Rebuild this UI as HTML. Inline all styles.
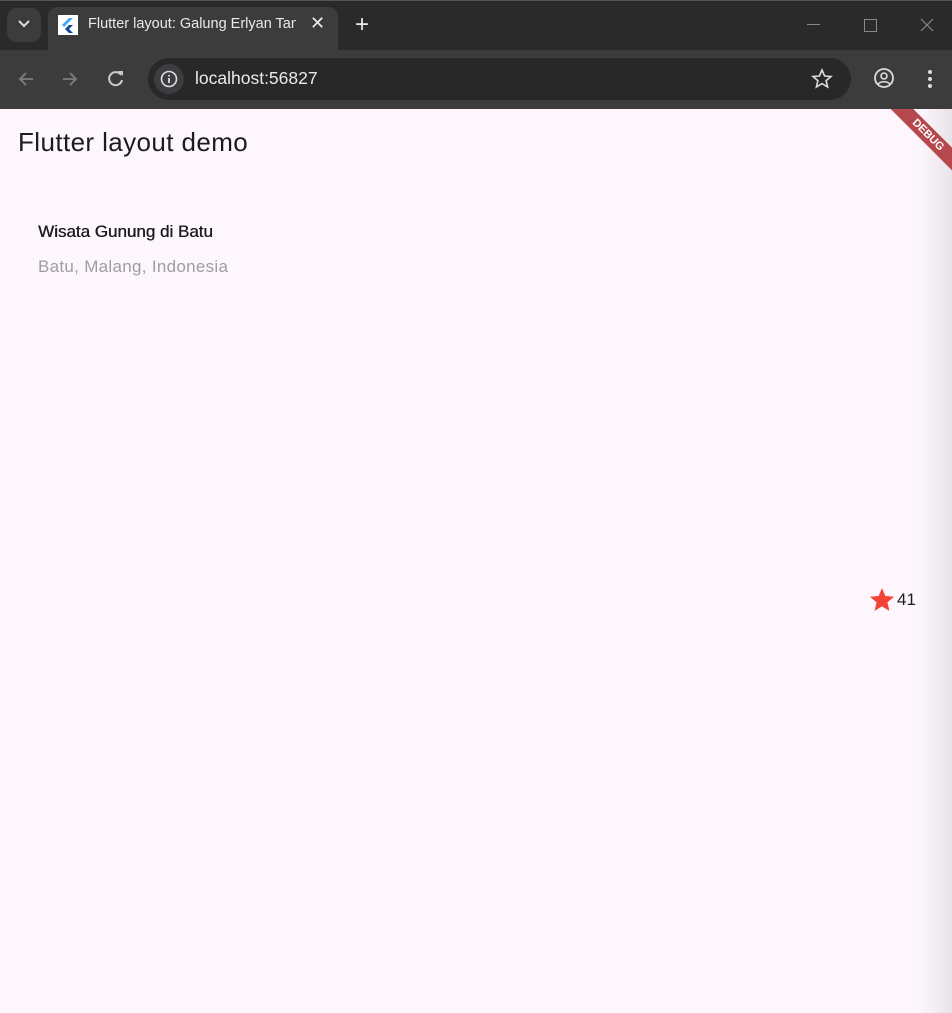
<!DOCTYPE html><html><head><style>
body{margin:0;width:952px;height:1013px;overflow:hidden;background:#fdf7fd;font-family:"Liberation Sans",sans-serif;position:relative}
.top{position:absolute;left:0;top:0;width:952px;height:50px;background:#2a2a2a;border-top:1px solid #555}
.bar{position:absolute;left:0;top:50px;width:952px;height:59px;background:#3c3c3c}
.tab{position:absolute;left:48px;top:7px;width:290px;height:43px;background:#3c3c3c;border-radius:10px 10px 0 0}
.abs{position:absolute}
.omni{position:absolute;left:148px;top:58px;width:703px;height:42px;background:#282828;border-radius:21px}
.shadow{position:absolute;right:0;top:109px;width:34px;height:904px;background:linear-gradient(to right,rgba(0,0,0,0),rgba(0,0,0,0.08))}
.clip{position:absolute;left:0;top:109px;width:952px;height:904px;overflow:hidden}
</style></head><body>
<div class="top"></div>
<div class="abs" style="left:7px;top:8px;width:34px;height:34px;background:#3c3c3c;border-radius:10px"></div>
<svg class="abs" style="left:17px;top:19px" width="14" height="10"><path d="M2 2l5 5 5-5" stroke="#ddd" stroke-width="2" fill="none"/></svg>
<div class="tab"></div>
<div class="abs" style="left:58px;top:15px;width:20px;height:20px;background:#fff"><svg width="20" height="20"><path d="M11 3L4 10l2 2 9-9z" fill="#42a5f5"/><path d="M11 10l-4 4 4 4h4l-4-4 4-4z" fill="#0d47a1"/></svg></div>
<div class="abs" style="left:88px;top:16px;color:#e8eaed;font-size:14.5px;white-space:nowrap;width:208px;overflow:hidden">Flutter layout: Galung Erlyan Tan</div>
<div class="abs" style="left:310px;top:13px;color:#e8eaed;font-size:18px">✕</div>
<div class="abs" style="left:355px;top:11px;color:#e8eaed;font-size:24px">+</div>
<div class="abs" style="left:807px;top:24px;width:13px;height:1px;background:#888"></div>
<div class="abs" style="left:864px;top:19px;width:11px;height:11px;border:1px solid #888"></div>
<svg class="abs" style="left:920px;top:18px" width="14" height="14"><path d="M1 1l12 12M13 1L1 13" stroke="#888" stroke-width="1.2"/></svg>
<div class="bar"></div>
<svg class="abs" style="left:16px;top:69px" width="20" height="20"><path d="M17 10H4M10 4l-6 6 6 6" stroke="#777" stroke-width="2" fill="none"/></svg>
<svg class="abs" style="left:60px;top:69px" width="20" height="20"><path d="M3 10h13M10 4l6 6-6 6" stroke="#777" stroke-width="2" fill="none"/></svg>
<svg class="abs" style="left:106px;top:69px" width="20" height="20"><path d="M15 6A6.5 6.5 0 1 0 16 11" stroke="#ccc" stroke-width="2" fill="none"/><path d="M12 2h5v5z" fill="#ccc"/></svg>
<div class="omni"></div>
<div class="abs" style="left:154px;top:64px;width:30px;height:30px;border-radius:15px;background:#3c3d40"></div>
<svg class="abs" style="left:160px;top:70px" width="18" height="18"><circle cx="9" cy="9" r="7.5" stroke="#ddd" stroke-width="1.6" fill="none"/><path d="M9 8v5M9 5v1.5" stroke="#ddd" stroke-width="1.8"/></svg>
<div class="abs" style="left:195px;top:68px;color:#e8eaed;font-size:17.5px">localhost:56827</div>
<svg class="abs" style="left:811px;top:68px" width="22" height="22"><path d="M11 2l2.6 6 6.4.5-4.9 4.2 1.5 6.3L11 15.6 5.4 19l1.5-6.3L2 8.5 8.4 8z" stroke="#ddd" stroke-width="1.6" fill="none"/></svg>
<svg class="abs" style="left:873px;top:67px" width="22" height="22"><circle cx="11" cy="11" r="9" stroke="#ddd" stroke-width="1.8" fill="none"/><circle cx="11" cy="9" r="3" stroke="#ddd" stroke-width="1.6" fill="none"/><path d="M5 17c3-3 9-3 12 0" stroke="#ddd" stroke-width="1.6" fill="none"/></svg>
<svg class="abs" style="left:926px;top:68px" width="8" height="22"><circle cx="4" cy="4" r="2" fill="#ddd"/><circle cx="4" cy="11" r="2" fill="#ddd"/><circle cx="4" cy="18" r="2" fill="#ddd"/></svg>
<div class="clip">
<div class="shadow" style="top:0"></div>
<div class="abs" style="left:18px;top:18px;font-size:26px;letter-spacing:0.4px;color:#1d1b20">Flutter layout demo</div>
<div class="abs" style="left:38px;top:113px;font-size:17px;color:#1d1b20;text-shadow:0.4px 0 0 #1d1b20">Wisata Gunung di Batu</div>
<div class="abs" style="left:38px;top:148px;font-size:17px;letter-spacing:0.3px;color:#9e9e9e">Batu, Malang, Indonesia</div>
<svg class="abs" style="left:869px;top:478px" width="26" height="26"><path d="M13 1l3.3 8 8.7.7-6.6 5.7 2 8.5L13 19.4 5.6 23.9l2-8.5L1 9.7l8.7-.7z" fill="#f44336"/></svg>
<div class="abs" style="left:897px;top:481px;font-size:17px;color:#1d1b20">41</div>
<div class="abs" style="left:868px;top:18px;width:120px;height:16px;background:#b5484d;transform:rotate(45deg);color:#fff;font-size:11px;font-weight:bold;text-align:center;line-height:16px">DEBUG</div>
</div>
</body></html>
